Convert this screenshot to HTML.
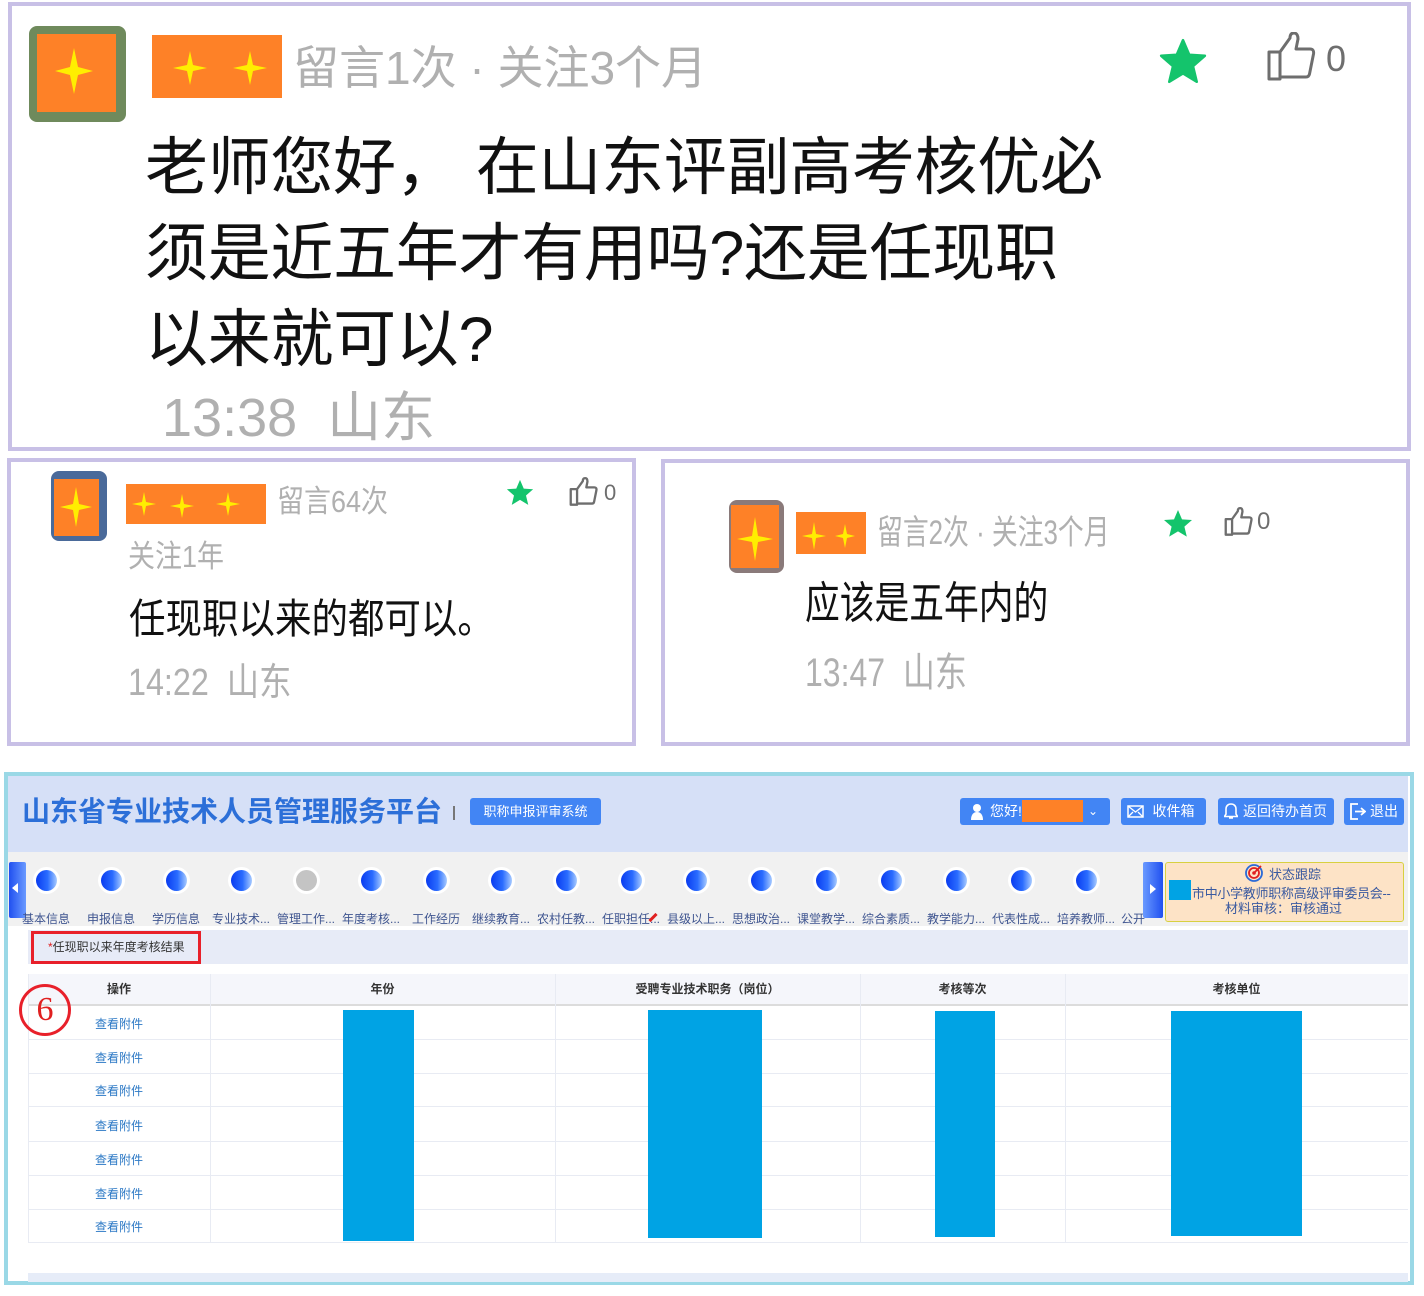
<!DOCTYPE html>
<html><head><meta charset="utf-8">
<style>
*{margin:0;padding:0;box-sizing:border-box}
body{width:1424px;height:1296px;background:#fff;position:relative;overflow:hidden;font-family:"Liberation Sans","Noto Sans CJK SC",sans-serif}
.a{position:absolute;white-space:nowrap}
.box{position:absolute;border:4px solid #c8c0e6;background:#fff}
.g{color:#b0b0b0}
.or{position:absolute;background:#fe8127}
.av{position:absolute;border-radius:8px;background:#6a7a5a;overflow:hidden}
.btn{position:absolute;background:#4285f4;color:#fff;font-size:14px;border-radius:3px;height:27px;line-height:27px;text-align:center}
.dot{position:absolute;width:27px;height:27px;border-radius:50%;background:#fff;top:867px}
.dot i{position:absolute;left:3px;top:3px;width:21px;height:21px;border-radius:50%;background:linear-gradient(90deg,#0a3cf0,#2a6cff 55%,#a8cbff)}
.lbl{position:absolute;top:910px;font-size:12px;color:#3f5590;width:64px;text-align:center;white-space:nowrap;overflow:hidden}
.th{position:absolute;top:974px;height:31px;line-height:31px;font-size:12px;font-weight:bold;color:#333;text-align:center}
.lk{position:absolute;left:28px;width:182px;text-align:center;font-size:12px;color:#2b78c5}
.hl{position:absolute;left:28px;width:1380px;height:1px;background:#e8ebf3}
.vl{position:absolute;top:974px;width:1px;height:269px;background:#e8ebf3}
.bb{position:absolute;background:#00a3e4}
</style></head><body>

<!-- top box -->
<div class="box" style="left:8px;top:2px;width:1403px;height:449px"></div>
<div class="av" style="left:29px;top:26px;width:97px;height:96px;background:#6f8a5c"></div>
<div class="or" style="left:37px;top:34px;width:79px;height:78px"></div>
<svg class="a" style="left:37px;top:34px" width="79" height="78"><polygon points="37,14 41,33 56,37 41,41 37,60 33,41 18,37 33,33" fill="#ffee00"/></svg>
<div class="or" style="left:152px;top:35px;width:130px;height:63px"></div>
<svg class="a" style="left:152px;top:35px" width="130" height="63"><polygon points="38,16 41,30 55,33 41,36 38,50 35,36 21,33 35,30" fill="#ffee00"/><polygon points="98,16 101,30 115,33 101,36 98,50 95,36 81,33 95,30" fill="#ffee00"/></svg>
<div class="a g" style="left:293px;top:38px;font-size:46px;line-height:60px">留言1次 · 关注3个月</div>
<svg class="a" style="left:1158px;top:37px" width="50" height="50" viewBox="0 0 24 24"><polygon points="12,1.5 15,8.5 22.5,9 16.8,14 18.6,21.5 12,17.5 5.4,21.5 7.2,14 1.5,9 9,8.5" fill="#14c46c" stroke="#14c46c" stroke-width="1.2" stroke-linejoin="round"/></svg>
<svg class="a" style="left:1266px;top:32px" width="52" height="50" viewBox="0 0 52 50"><path d="M3 20h11v27H3z M14 20l10-14c0-4 2-5 4-5 3 0 4 3 4 6l-2 10h14c3 0 4 2 3.5 5l-4 20c-.5 2-1.5 3-3.5 3H14" fill="none" stroke="#6e6e6e" stroke-width="3" stroke-linejoin="round"/></svg>
<div class="a" style="left:1326px;top:38px;font-size:36px;color:#6e6e6e">0</div>
<div class="a" style="left:145px;top:125px;font-size:63px;line-height:86px;color:#111;letter-spacing:-0.3px">老师您好，&nbsp;在山东评副高考核优必<br>须是近五年才有用吗?还是任现职<br>以来就可以?</div>
<div class="a g" style="left:162px;top:385px;font-size:54px;line-height:66px">13:38&nbsp;&nbsp;山东</div>

<!-- box 2 -->
<div class="box" style="left:7px;top:458px;width:629px;height:288px"></div>
<div class="av" style="left:51px;top:471px;width:56px;height:70px;background:#4a6a9a"></div>
<div class="or" style="left:54px;top:479px;width:45px;height:57px"></div>
<svg class="a" style="left:54px;top:479px" width="45" height="57"><polygon points="22,8 25,25 38,28 25,31 22,48 19,31 6,28 19,25" fill="#ffee00"/></svg>
<div class="or" style="left:126px;top:484px;width:140px;height:40px"></div>
<svg class="a" style="left:126px;top:484px" width="140" height="40"><polygon points="18,8 20,18 30,20 20,22 18,32 16,22 6,20 16,18" fill="#ffee00"/><polygon points="56,10 58,20 68,22 58,24 56,34 54,24 44,22 54,20" fill="#ffee00"/><polygon points="102,8 104,18 114,20 104,22 102,32 100,22 90,20 100,18" fill="#ffee00"/></svg>
<div class="a g" style="left:277px;top:482px;font-size:31px;line-height:40px;transform:scaleX(.87);transform-origin:left">留言64次</div>
<div class="a g" style="left:128px;top:537px;font-size:31px;line-height:40px;transform:scaleX(.87);transform-origin:left">关注1年</div>
<div class="a" style="left:129px;top:594px;font-size:41px;line-height:50px;color:#111;transform:scaleX(.89);transform-origin:left">任现职以来的都可以。</div>
<div class="a g" style="left:128px;top:660px;font-size:38px;line-height:46px;transform:scaleX(.85);transform-origin:left">14:22&nbsp;&nbsp;山东</div>
<svg class="a" style="left:505px;top:478px" width="30" height="30" viewBox="0 0 24 24"><polygon points="12,1.5 15,8.5 22.5,9 16.8,14 18.6,21.5 12,17.5 5.4,21.5 7.2,14 1.5,9 9,8.5" fill="#14c46c"/></svg>
<svg class="a" style="left:569px;top:477px" width="30" height="30" viewBox="0 0 52 50"><path d="M3 20h11v27H3z M14 20l10-14c0-4 2-5 4-5 3 0 4 3 4 6l-2 10h14c3 0 4 2 3.5 5l-4 20c-.5 2-1.5 3-3.5 3H14" fill="none" stroke="#6e6e6e" stroke-width="4" stroke-linejoin="round"/></svg>
<div class="a" style="left:604px;top:480px;font-size:22px;color:#6e6e6e">0</div>

<!-- box 3 -->
<div class="box" style="left:661px;top:459px;width:749px;height:287px"></div>
<div class="av" style="left:729px;top:500px;width:55px;height:73px;background:#8a7a7a"></div>
<div class="or" style="left:731px;top:505px;width:48px;height:63px"></div>
<svg class="a" style="left:731px;top:505px" width="48" height="63"><polygon points="24,12 27,31 42,34 27,37 24,56 21,37 6,34 21,31" fill="#ffee00"/></svg>
<div class="or" style="left:796px;top:512px;width:70px;height:42px"></div>
<svg class="a" style="left:796px;top:512px" width="70" height="42"><polygon points="18,10 20,22 30,24 20,26 18,38 16,26 6,24 16,22" fill="#ffee00"/><polygon points="49,12 51,22 59,24 51,26 49,36 47,26 39,24 47,22" fill="#ffee00"/></svg>
<div class="a g" style="left:877px;top:512px;font-size:34px;line-height:42px;transform:scaleX(.76);transform-origin:left">留言2次 · 关注3个月</div>
<div class="a" style="left:805px;top:578px;font-size:44px;line-height:52px;color:#111;transform:scaleX(.79);transform-origin:left">应该是五年内的</div>
<div class="a g" style="left:805px;top:649px;font-size:40px;line-height:48px;transform:scaleX(.8);transform-origin:left">13:47&nbsp;&nbsp;山东</div>
<svg class="a" style="left:1162px;top:506px" width="32" height="36" viewBox="0 0 24 24"><polygon points="12,1.5 15,8.5 22.5,9 16.8,14 18.6,21.5 12,17.5 5.4,21.5 7.2,14 1.5,9 9,8.5" fill="#14c46c"/></svg>
<svg class="a" style="left:1224px;top:504px" width="30" height="36" viewBox="0 0 52 50"><path d="M3 20h11v27H3z M14 20l10-14c0-4 2-5 4-5 3 0 4 3 4 6l-2 10h14c3 0 4 2 3.5 5l-4 20c-.5 2-1.5 3-3.5 3H14" fill="none" stroke="#6e6e6e" stroke-width="4" stroke-linejoin="round"/></svg>
<div class="a" style="left:1257px;top:508px;font-size:24px;color:#6e6e6e">0</div>

<!-- bottom panel -->
<div class="a" style="left:4px;top:772px;width:1410px;height:513px;border:4px solid #9ad8e6;background:#fff"></div>
<div class="a" style="left:8px;top:776px;width:1400px;height:76px;background:#d6e0f7"></div>
<div class="a" style="left:22px;top:794px;font-size:28px;font-weight:bold;color:#2c6fd8;line-height:36px">山东省专业技术人员管理服务平台</div>
<div class="a" style="left:453px;top:806px;width:2px;height:14px;background:#777"></div>
<div class="btn" style="left:470px;top:798px;width:131px;font-size:13px">职称申报评审系统</div>
<div class="btn" style="left:960px;top:798px;width:150px;text-align:left;padding-left:30px">您好!</div>
<div class="a" style="left:1022px;top:800px;width:61px;height:22px;background:#fe8127"></div>
<div class="a" style="left:1088px;top:798px;color:#fff;font-size:12px;line-height:27px">⌄</div>
<svg class="a" style="left:969px;top:803px" width="16" height="17"><circle cx="8" cy="5" r="4" fill="#fff"/><path d="M2 17c0-6 3-8 6-8s6 2 6 8z" fill="#fff"/></svg>
<div class="btn" style="left:1121px;top:798px;width:85px;padding-left:20px">收件箱</div>
<svg class="a" style="left:1127px;top:805px" width="17" height="13"><rect x="1" y="1" width="15" height="11" fill="none" stroke="#fff" stroke-width="1.5"/><path d="M1 1l7.5 6L16 1M1 12l5-5M16 12l-5-5" stroke="#fff" stroke-width="1.3" fill="none"/></svg>
<div class="btn" style="left:1218px;top:798px;width:116px;padding-left:18px">返回待办首页</div>
<svg class="a" style="left:1224px;top:803px" width="14" height="17"><path d="M7 1c-3 0-5 2-5 5v5l-1.5 2.5h13L12 11V6c0-3-2-5-5-5zM5 15h4" fill="none" stroke="#fff" stroke-width="1.6"/></svg>
<div class="btn" style="left:1344px;top:798px;width:60px;padding-left:20px">退出</div>
<svg class="a" style="left:1350px;top:803px" width="16" height="17"><path d="M8 1H1v15h7M5 8.5h10M11 5l4 3.5-4 3.5" fill="none" stroke="#fff" stroke-width="1.8"/></svg>

<div class="a" style="left:8px;top:852px;width:1400px;height:74px;background:#f1f1f1"></div>
<div class="a" style="left:9px;top:862px;width:17px;height:56px;background:linear-gradient(90deg,#2050f0,#6a9aff);border-radius:2px"></div>
<div class="a" style="left:12px;top:883px;width:0;height:0;border:5px solid transparent;border-right:6px solid #fff;border-left:0"></div>
<div class="dot" style="left:33px"><i></i></div><div class="dot" style="left:98px"><i></i></div><div class="dot" style="left:163px"><i></i></div><div class="dot" style="left:228px"><i></i></div><div class="dot" style="left:293px"><i style="background:#c4c4c4"></i></div><div class="dot" style="left:358px"><i></i></div><div class="dot" style="left:423px"><i></i></div><div class="dot" style="left:488px"><i></i></div><div class="dot" style="left:553px"><i></i></div><div class="dot" style="left:618px"><i></i></div><div class="dot" style="left:683px"><i></i></div><div class="dot" style="left:748px"><i></i></div><div class="dot" style="left:813px"><i></i></div><div class="dot" style="left:878px"><i></i></div><div class="dot" style="left:943px"><i></i></div><div class="dot" style="left:1008px"><i></i></div><div class="dot" style="left:1073px"><i></i></div>
<div class="lbl" style="left:14px">基本信息</div><div class="lbl" style="left:79px">申报信息</div><div class="lbl" style="left:144px">学历信息</div><div class="lbl" style="left:209px">专业技术...</div><div class="lbl" style="left:274px">管理工作...</div><div class="lbl" style="left:339px">年度考核...</div><div class="lbl" style="left:404px">工作经历</div><div class="lbl" style="left:469px">继续教育...</div><div class="lbl" style="left:534px">农村任教...</div><div class="lbl" style="left:599px">任职担任...</div><div class="lbl" style="left:664px">县级以上...</div><div class="lbl" style="left:729px">思想政治...</div><div class="lbl" style="left:794px">课堂教学...</div><div class="lbl" style="left:859px">综合素质...</div><div class="lbl" style="left:924px">教学能力...</div><div class="lbl" style="left:989px">代表性成...</div><div class="lbl" style="left:1054px">培养教师...</div><div class="lbl" style="left:1119px;width:28px">公开</div>
<div class="a" style="left:648px;top:916px;width:10px;height:3px;background:#e02020;transform:rotate(-45deg)"></div>
<div class="a" style="left:1143px;top:862px;width:20px;height:56px;background:linear-gradient(90deg,#6a9aff,#2050f0);border-radius:2px"></div>
<div class="a" style="left:1150px;top:884px;width:0;height:0;border:5px solid transparent;border-left:6px solid #fff;border-right:0"></div>
<div class="a" style="left:1165px;top:862px;width:239px;height:60px;background:#fde3c6;border:1px solid #d8d040;border-radius:3px"></div>
<svg class="a" style="left:1245px;top:864px" width="18" height="18"><circle cx="9" cy="9" r="8" fill="none" stroke="#2a6ad8" stroke-width="1.8"/><circle cx="9" cy="9" r="5" fill="none" stroke="#e02020" stroke-width="1.8"/><circle cx="9" cy="9" r="1.8" fill="#e02020"/><path d="M9 9l7-7" stroke="#e02020" stroke-width="1.8"/></svg>
<div class="a" style="left:1269px;top:864px;font-size:13px;color:#3a5aa0">状态跟踪</div>
<div class="a" style="left:1169px;top:880px;width:22px;height:20px;background:#00a3e4"></div>
<div class="a" style="left:1192px;top:883px;font-size:13px;color:#3a5aa0;letter-spacing:-0.3px">市中小学教师职称高级评审委员会--</div>
<div class="a" style="left:1225px;top:898px;font-size:13px;color:#3a5aa0">材料审核：审核通过</div>

<div class="a" style="left:28px;top:930px;width:1380px;height:34px;background:#e7ebf7"></div>
<div class="a" style="left:31px;top:931px;width:170px;height:33px;border:3px solid #e8202a;font-size:12px;line-height:27px;padding-left:14px;color:#333"><span style="color:#e02020">*</span>任现职以来年度考核结果</div>

<div class="a" style="left:28px;top:974px;width:1380px;height:31px;background:#f5f6fb"></div>
<div class="a" style="left:28px;top:1004px;width:1380px;height:2px;background:#dcdcdc"></div>
<div class="th" style="left:28px;width:182px">操作</div>
<div class="th" style="left:210px;width:345px">年份</div>
<div class="th" style="left:555px;width:305px">受聘专业技术职务（岗位）</div>
<div class="th" style="left:860px;width:205px">考核等次</div>
<div class="th" style="left:1065px;width:343px">考核单位</div>
<div class="vl" style="left:28px"></div><div class="vl" style="left:210px"></div><div class="vl" style="left:555px"></div><div class="vl" style="left:860px"></div><div class="vl" style="left:1065px"></div>
<div class="hl" style="top:1039px"></div><div class="hl" style="top:1073px"></div><div class="hl" style="top:1106px"></div><div class="hl" style="top:1141px"></div><div class="hl" style="top:1175px"></div><div class="hl" style="top:1209px"></div><div class="hl" style="top:1242px"></div>
<div class="lk" style="top:1015px">查看附件</div><div class="lk" style="top:1049px">查看附件</div><div class="lk" style="top:1082px">查看附件</div><div class="lk" style="top:1117px">查看附件</div><div class="lk" style="top:1151px">查看附件</div><div class="lk" style="top:1185px">查看附件</div><div class="lk" style="top:1218px">查看附件</div>
<div class="bb" style="left:343px;top:1010px;width:71px;height:231px"></div>
<div class="bb" style="left:648px;top:1010px;width:114px;height:228px"></div>
<div class="bb" style="left:935px;top:1011px;width:60px;height:226px"></div>
<div class="bb" style="left:1171px;top:1011px;width:131px;height:225px"></div>
<div class="a" style="left:19px;top:984px;width:52px;height:52px;border:3px solid #e8202a;border-radius:50%;text-align:center;font-family:'Liberation Serif',serif;font-size:34px;line-height:46px;color:#e02020">6</div>
<div class="a" style="left:28px;top:1273px;width:1380px;height:9px;background:#e6ecf8"></div>
</body></html>
